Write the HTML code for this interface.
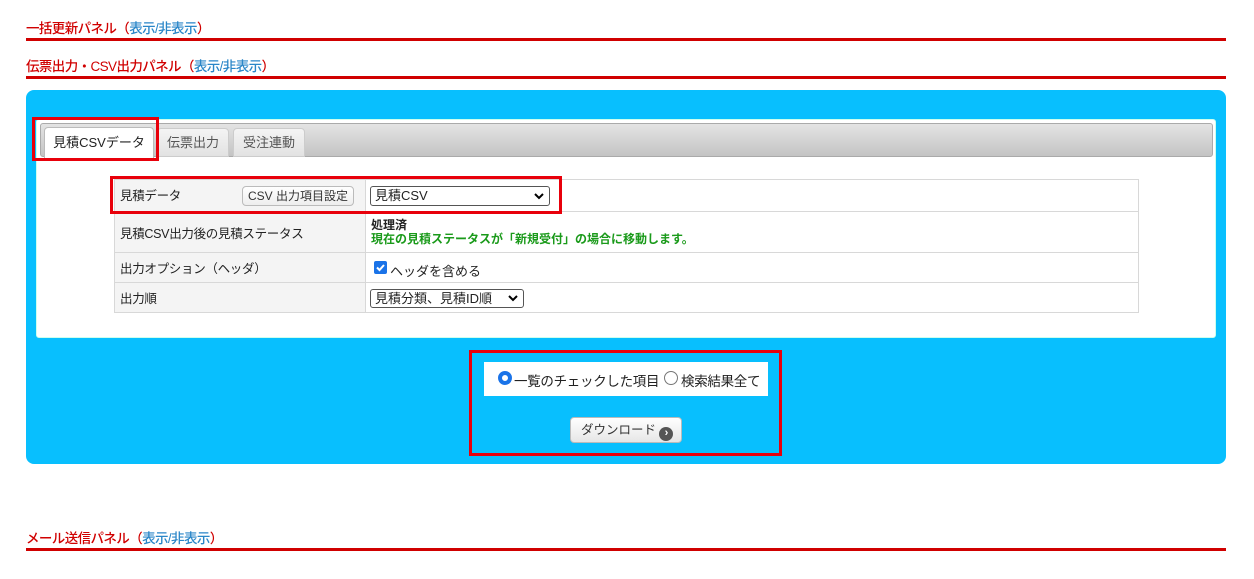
<!DOCTYPE html><html><head><meta charset="utf-8"><style>
*{box-sizing:border-box}body{margin:0;width:1254px;height:579px;background:#fff;font-family:"Liberation Sans","Noto Sans CJK JP",sans-serif;position:relative;overflow:hidden;font-size:13px;color:#222}
.a{position:absolute;white-space:nowrap}
.h{font-size:13.5px;color:#d00000;left:26px;letter-spacing:-0.6px;font-weight:500}.h span{color:#2a86c8}
.line{left:26px;width:1200px;height:3px;background:#d00000}
.rb{border:3px solid #e8000b}
td{border:1px solid #d8d8d8;padding:0 5px;font-size:12.5px;letter-spacing:-0.3px}
.lab{background:#f4f4f4;width:251px}
.sel{border:1px solid #555;border-radius:3px;background:#fff;height:20px;font-size:13px;line-height:17px;padding:0 4px;position:absolute}
.chev{position:absolute;right:5px;top:5px}
</style></head><body>
<div class="a h" style="top:17px">一括更新パネル（<span>表示/非表示</span>）</div>
<div class="a line" style="top:38px"></div>
<div class="a h" style="top:55px">伝票出力・CSV出力パネル（<span>表示/非表示</span>）</div>
<div class="a line" style="top:76px"></div>
<div class="a" style="left:26px;top:90px;width:1200px;height:374px;background:#08bffe;border-radius:8px"></div>
<div class="a" style="left:36px;top:119px;width:1180px;height:219px;background:#fff;border-radius:3px;border:1px solid #cfe"></div>
<div class="a" style="left:40px;top:123px;width:1173px;height:34px;background:linear-gradient(#e4e4e4,#c4c4c4);border:1px solid #aaa;border-radius:3px"></div>
<div class="a" style="left:44px;top:127px;width:110px;height:31px;background:#fff;border:1px solid #bbb;border-bottom:none;border-radius:4px 4px 0 0;text-align:center;line-height:30px">見積CSVデータ</div>
<div class="a" style="left:157px;top:128px;width:72px;height:29px;background:linear-gradient(#f4f4f4,#e2e2e2);border:1px solid #ccc;border-radius:4px 4px 0 0;text-align:center;line-height:28px;color:#555">伝票出力</div>
<div class="a" style="left:233px;top:128px;width:72px;height:29px;background:linear-gradient(#f4f4f4,#e2e2e2);border:1px solid #ccc;border-radius:4px 4px 0 0;text-align:center;line-height:28px;color:#555">受注連動</div>
<div class="a rb" style="left:32px;top:117px;width:127px;height:44px"></div>
<table class="a" style="left:114px;top:179px;width:1025px;border-collapse:collapse">
<tr style="height:32px"><td class="lab" style="vertical-align:top;padding-top:5px">見積データ</td><td></td></tr>
<tr style="height:41px"><td class="lab">見積CSV出力後の見積ステータス</td><td style="font-weight:bold;line-height:14px;font-size:12px;letter-spacing:0">処理済<br><span style="color:#1a9a1a">現在の見積ステータスが「新規受付」の場合に移動します。</span></td></tr>
<tr style="height:30px"><td class="lab">出力オプション（ヘッダ）</td><td></td></tr>
<tr style="height:30px"><td class="lab">出力順</td><td></td></tr>
</table>
<div class="a" style="left:242px;top:186px;width:112px;height:20px;border:1px solid #bbb;border-radius:4px;background:linear-gradient(#fff,#eee);font-size:12px;text-align:center;line-height:18px;color:#333">CSV 出力項目設定</div>
<div class="sel" style="left:370px;top:186px;width:180px">見積CSV<svg class="chev" width="10" height="8" viewBox="0 0 10 8"><path d="M1 2l4 4 4-4" stroke="#000" stroke-width="2" fill="none"/></svg></div>
<div class="a" style="left:374px;top:261px;width:13px;height:13px;background:#1a73e8;border-radius:2px"><svg width="13" height="13" viewBox="0 0 13 13" style="display:block"><path d="M3 6.5l2.5 2.5 4.5-5" stroke="#fff" stroke-width="2" fill="none"/></svg></div>
<div class="a" style="left:390px;top:261px">ヘッダを含める</div>
<div class="sel" style="left:370px;top:289px;width:154px;height:19px">見積分類、見積ID順<svg class="chev" width="10" height="8" viewBox="0 0 10 8" style="top:4px"><path d="M1 2l4 4 4-4" stroke="#000" stroke-width="2" fill="none"/></svg></div>
<div class="a rb" style="left:110px;top:176px;width:452px;height:38px"></div>
<div class="a" style="left:484px;top:362px;width:284px;height:34px;background:#fff"></div>
<div class="a" style="left:498px;top:371px;width:14px;height:14px;border-radius:50%;border:4px solid #1a73e8;background:#fff"></div>
<div class="a" style="left:514px;top:370px;font-size:13.5px;letter-spacing:-0.3px">一覧のチェックした項目</div>
<div class="a" style="left:664px;top:371px;width:14px;height:14px;border-radius:50%;border:1px solid #777;background:#fff"></div>
<div class="a" style="left:681px;top:370px;font-size:13.5px;letter-spacing:-0.3px">検索結果全て</div>
<div class="a" style="left:570px;top:417px;width:112px;height:26px;border:1px solid #bbb;border-radius:4px;background:linear-gradient(#fff,#e6e6e6);line-height:24px;font-size:12.5px;color:#333;padding-left:10px">ダウンロード <span style="display:inline-block;width:14px;height:14px;border-radius:50%;background:#555;color:#fff;font-size:11px;line-height:13px;text-align:center;vertical-align:-2px;font-weight:bold">›</span></div>
<div class="a rb" style="left:469px;top:350px;width:313px;height:106px"></div>
<div class="a h" style="top:527px">メール送信パネル（<span>表示/非表示</span>）</div>
<div class="a line" style="top:548px"></div>
</body></html>
